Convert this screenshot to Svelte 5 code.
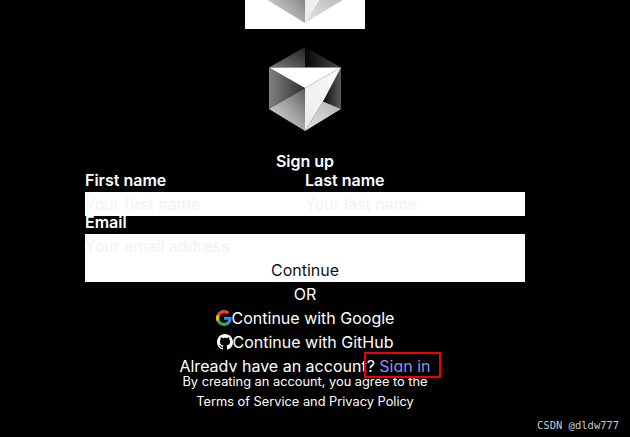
{#snippet cube(prefix)}
  <svg class="cube" viewBox="0 0 72 84" aria-hidden="true">
    <defs>
      <linearGradient id="{prefix}a" x1="0" y1="1" x2="1" y2="0"><stop offset="0" stop-color="#7a7a7a"/><stop offset="1" stop-color="#242424"/></linearGradient>
      <linearGradient id="{prefix}b" x1="0" y1="0" x2="1" y2="0"><stop offset="0" stop-color="#060606"/><stop offset="1" stop-color="#4a4a4a"/></linearGradient>
      <linearGradient id="{prefix}c" x1="0" y1="0" x2="1" y2="0"><stop offset="0" stop-color="#828282"/><stop offset="1" stop-color="#2c2c2c"/></linearGradient>
      <linearGradient id="{prefix}d" x1="0" y1="1" x2="1" y2="0"><stop offset="0" stop-color="#e6e6e6"/><stop offset="0.55" stop-color="#a2a2a2"/><stop offset="1" stop-color="#5c5c5c"/></linearGradient>
      <linearGradient id="{prefix}e" x1="0" y1="1" x2="1" y2="0"><stop offset="0" stop-color="#ececec"/><stop offset="1" stop-color="#fafafa"/></linearGradient>
      <linearGradient id="{prefix}f" x1="1" y1="0" x2="0" y2="0"><stop offset="0" stop-color="#5a5a5a"/><stop offset="1" stop-color="#0c0c0c"/></linearGradient>
      <linearGradient id="{prefix}g" x1="1" y1="0" x2="0" y2="1"><stop offset="0" stop-color="#b4b4b4"/><stop offset="1" stop-color="#e4e4e4"/></linearGradient>
    </defs>
    <polygon points="36,0 0,20.500 36,20.500" fill="url(#{prefix}a)"/>
    <polygon points="36,0 72,20.500 36,20.500" fill="url(#{prefix}b)"/>
    <polygon points="0,20.500 36,41 0,62" fill="url(#{prefix}c)"/>
    <polygon points="0,62 36,41 36,84" fill="url(#{prefix}d)"/>
    <polygon points="72,20.500 54,54.500 72,62" fill="url(#{prefix}f)"/>
    <polygon points="54,54.500 72,62 36,84" fill="url(#{prefix}g)"/>
    <polygon points="36,41 72,20.500 54,54.500 36,84" fill="url(#{prefix}e)"/>
    <polygon points="0,20.500 72,20.500 36,41" fill="#fff"/>
  </svg>
{/snippet}

<div class="viewport">
  <main class="page">
    <div class="hero">{@render cube('h')}</div>
    <div class="logo">{@render cube('l')}</div>
    <h1>Sign up</h1>
    <div class="names">
      <div class="col">
        <label for="first">First name</label>
        <input id="first" placeholder="Your first name" />
      </div>
      <div class="col">
        <label for="last">Last name</label>
        <input id="last" placeholder="Your last name" />
      </div>
    </div>
    <label class="email-label" for="email">Email</label>
    <input id="email" placeholder="Your email address" />
    <button class="continue">Continue</button>
    <div class="line">OR</div>
    <div class="line provider">
      <svg viewBox="0 0 24 24" width="16" height="16" aria-hidden="true">
        <path fill="#4285F4" d="M23.500 12.300c0-.8-.1-1.600-.2-2.300H12v4.500h6.500c-.3 1.500-1.100 2.700-2.400 3.600v3h3.900c2.200-2.100 3.500-5.100 3.500-8.800z"/>
        <path fill="#34A853" d="M12 24c3.200 0 6-1.100 8-2.900l-3.900-3c-1.100.7-2.500 1.200-4.100 1.200-3.100 0-5.800-2.100-6.700-5H1.300v3.100C3.300 21.300 7.300 24 12 24z"/>
        <path fill="#FBBC05" d="M5.300 14.300c-.5-1.500-.5-3.100 0-4.600V6.600h-4a12 12 0 0 0 0 10.800l4-3.100z"/>
        <path fill="#EA4335" d="M12 4.700c1.800 0 3.300.6 4.600 1.800l3.400-3.400C17.900 1.200 15.200 0 12 0 7.300 0 3.300 2.700 1.300 6.600l4 3.100c.9-2.900 3.600-5 6.700-5z"/>
      </svg><span>Continue with Google</span>
    </div>
    <div class="line provider">
      <svg viewBox="0 0 16 16" width="16" height="16" aria-hidden="true">
        <path fill="#fff" d="M8 0C3.580 0 0 3.580 0 8c0 3.540 2.290 6.530 5.470 7.590.4.070.55-.17.55-.38 0-.19-.01-.82-.01-1.490-2.010.37-2.530-.49-2.690-.94-.09-.23-.48-.94-.82-1.130-.28-.15-.68-.52-.01-.53.63-.01 1.080.58 1.230.82.720 1.210 1.870.87 2.330.66.070-.52.280-.87.510-1.070-1.780-.2-3.640-.89-3.640-3.950 0-.87.310-1.590.820-2.150-.08-.2-.36-1.020.08-2.120 0 0 .67-.21 2.200.82.640-.18 1.320-.27 2-.27s1.360.09 2 .27c1.530-1.040 2.200-.82 2.200-.82.440 1.100.16 1.920.08 2.120.51.560.82 1.270.82 2.150 0 3.070-1.870 3.750-3.650 3.950.29.250.54.730.54 1.480 0 1.070-.01 1.930-.01 2.200 0 .21.150.46.550.38A8.010 8.010 0 0 0 16 8c0-4.420-3.580-8-8-8z"/>
      </svg><span>Continue with GitHub</span>
    </div>
    <div class="line signin">Already have an account? <a href="#top">Sign in</a></div>
    <p class="terms">By creating an account, you agree to the<br />Terms of Service and Privacy Policy</p>
  </main>
</div>
<div class="highlight"></div>
<div class="mark">CSDN @dldw777</div>

<style>
  :global(body) {
    margin: 0;
    background: #000;
    color: #fff;
    font-family: Inter, "Liberation Sans", sans-serif;
    overflow: hidden;
  }
  .viewport {
    width: 610px;
  }
  .page {
    width: 440px;
    margin: 0 auto;
    display: flex;
    flex-direction: column;
    align-items: stretch;
    font-size: 16px;
    line-height: 24px;
    text-align: center;
  }
  .hero {
    align-self: center;
    width: 120px;
    height: 29px;
    background: #fff;
    overflow: hidden;
    display: flex;
    justify-content: center;
    align-items: flex-end;
  }
  .hero .cube {
    flex: none;
    width: 80px;
    height: 93px;
    margin-bottom: 6px;
  }
  .logo {
    align-self: center;
    height: 84px;
    margin-top: 18px;
  }
  .cube {
    display: block;
    width: 72px;
    height: 84px;
  }
  h1 {
    margin: 18px 0 0;
    font-size: 16px;
    font-weight: 600;
    line-height: 24px;
    height: 20px;
  }
  .names {
    display: grid;
    grid-template-columns: 1fr 1fr;
  }
  .col {
    display: flex;
    flex-direction: column;
  }
  label {
    display: block;
    text-align: left;
    font-weight: 600;
    line-height: 22px;
    height: 23px;
  }
  .email-label {
    height: 18px;
    line-height: 13px;
  }
  input {
    display: block;
    box-sizing: border-box;
    width: 100%;
    height: 24px;
    padding: 0;
    border: 0;
    border-radius: 0;
    outline: 0;
    background: #fff;
    font: 400 16px/24px Inter, "Liberation Sans", sans-serif;
    color: #111;
  }
  input::placeholder {
    color: #f3f1f1;
    opacity: 1;
  }
  .continue {
    display: block;
    width: 100%;
    height: 24px;
    padding: 0;
    border: 0;
    background: #fff;
    color: #111;
    font: 400 16px/24px Inter, "Liberation Sans", sans-serif;
  }
  .line {
    height: 24px;
    white-space: nowrap;
  }
  .provider {
    display: flex;
    justify-content: center;
    align-items: center;
  }
  .signin {
    height: 18px;
    overflow: hidden;
  }
  a {
    color: #8f8ff5;
    text-decoration: none;
  }
  .terms {
    margin: 0;
    font-size: 12.8px;
    line-height: 20px;
  }
  .highlight {
    position: absolute;
    left: 364px;
    top: 352px;
    width: 77px;
    height: 26px;
    box-sizing: border-box;
    border: 2px solid #f00000;
  }
  .mark {
    position: absolute;
    left: 537px;
    top: 418px;
    font: 10.500px/14px "DejaVu Sans Mono", monospace;
    color: #c8c8c8;
    white-space: nowrap;
  }
</style>
